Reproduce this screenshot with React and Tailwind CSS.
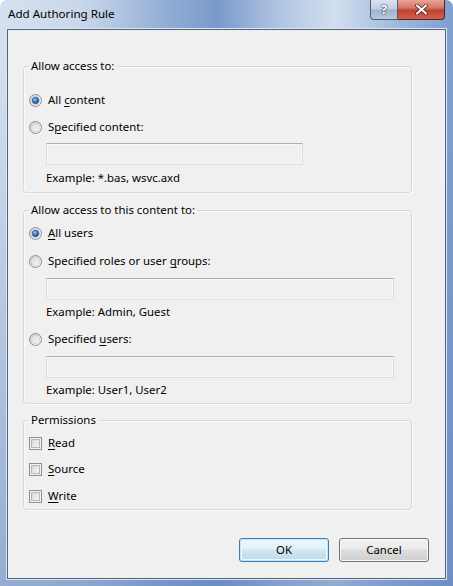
import { Fragment } from "react";

function Radio({ checked }) {
    return (
        <svg width="13" height="13" viewBox="0 0 13 13" className="shrink-0">
            <defs>
                <linearGradient id="rOuter" x1="0" y1="0" x2="1" y2="1">
                    <stop offset="0" stopColor="#d0d2d5" />
                    <stop offset="1" stopColor="#fbfbfb" />
                </linearGradient>
                <linearGradient id="rInner" x1="0" y1="0" x2="1" y2="1">
                    <stop offset="0" stopColor="#dadbdd" />
                    <stop offset="1" stopColor="#f7f7f7" />
                </linearGradient>
                <radialGradient id="rDot" cx="0.4" cy="0.35" r="0.7">
                    <stop offset="0" stopColor="#9bd3f5" />
                    <stop offset="0.55" stopColor="#2e78b8" />
                    <stop offset="1" stopColor="#154a7e" />
                </radialGradient>
            </defs>
            <circle cx="6.5" cy="6.5" r="6" fill="url(#rOuter)" stroke="#8b8d90" strokeWidth="1" />
            <circle cx="6.5" cy="6.5" r="4.2" fill="url(#rInner)" stroke="#c3c6ca" strokeWidth="0.6" />
            {checked && <circle cx="6.5" cy="6.5" r="3.2" fill="url(#rDot)" stroke="#1c4c7c" strokeWidth="0.6" />}
        </svg>
    )
}

function Check() {
    return (
        <div className="w-[13px] h-[13px] shrink-0 border border-[#8e8f8f] bg-[#f4f4f4] p-[1px]">
            <div className="w-full h-full border border-[#b4b8bd] bg-[linear-gradient(135deg,#d6d8db,#f6f6f6)]"></div>
        </div>
    )
}

// label with an access key: [before, key, after]
function Lbl({ parts }) {
    return (
        <span className="leading-[16px]">
            {parts[0]}<span className="underline underline-offset-[2px]">{parts[1]}</span>{parts[2]}
        </span>
    )
}

function TextBox({ w }) {
    return (
        <div className={`${w} h-[22px] ml-[22px] border border-[#dadde2] border-t-[#aeb0b5] bg-[#f0f0f0] shadow-[inset_0_0_0_1px_#f7f7f7]`}></div>
    )
}

function Group({ title, className, children }) {
    return (
        <fieldset className={`w-[389px] ml-[15px] border border-[#d5dadf] rounded-[3px] shadow-[inset_1px_1px_0_#fafafa,1px_1px_0_#fafafa] ${className}`}>
            <legend className="ml-[5px] px-[2px] leading-[16px]">{title}</legend>
            {children}
        </fieldset>
    )
}

export default function App() {
    return (
        <div className="w-[453px] h-[586px] flex flex-col rounded-t-[7px] overflow-hidden bg-[linear-gradient(180deg,rgba(255,255,255,0)_8%,rgba(95,130,185,0.55)_100%),linear-gradient(90deg,#d6e1ef_0%,#c9d7ea_18%,#8eabd3_38%,#7a9acb_48%,#b2c6e2_62%,#d2deee_74%,#9fb8dc_88%,#7f9fcf_100%)] font-['Noto_Sans',sans-serif] text-[11.4px] text-black">
            <div className="h-[29px] shrink-0 flex items-start relative">
                <div className="pl-[8px] pt-[6px] text-[11.6px] leading-[16px] text-black">Add Authoring Rule</div>
                <div className="ml-auto mr-[8px] flex h-[20px]">
                    <div className="w-[28px] h-[20px] border border-[#4a5f7a] border-t-0 rounded-bl-[4px] bg-[linear-gradient(180deg,#d9e3ef_0%,#c3d1e2_45%,#9fb3cc_55%,#b9c9dd_100%)] flex items-center justify-center">
                        <span className="text-[13px] font-bold text-white leading-none [text-shadow:0_0_2px_#1f2f44,0_0_1px_#1f2f44]">?</span>
                    </div>
                    <div className="w-[47px] h-[20px] border border-[#5a2018] border-t-0 border-l-0 rounded-br-[4px] bg-[linear-gradient(180deg,#e6a596_0%,#d4786a_40%,#c2402c_55%,#d0634e_100%)] flex items-center justify-center">
                        <svg width="13" height="11" viewBox="0 0 13 11">
                            <path d="M2 1.5 L11 9.5 M11 1.5 L2 9.5" stroke="#3d1510" strokeWidth="3.6" strokeLinecap="round" />
                            <path d="M2 1.5 L11 9.5 M11 1.5 L2 9.5" stroke="#ffffff" strokeWidth="2.2" strokeLinecap="round" />
                        </svg>
                    </div>
                </div>
            </div>
            <div className="mx-[7px] mb-[7px] flex-1 border border-[#4d6580] bg-[#f0f0f0] flex flex-col shadow-[0_0_0_1px_#dce6f2]">
                <Group title="Allow access to:" className="mt-[28px] pb-[6px]">
                    <div className="flex items-center gap-[6px] pl-[5px] mt-[18px]">
                        <Radio checked />
                        <Lbl parts={["All ", "c", "ontent"]} />
                    </div>
                    <div className="flex items-center gap-[6px] pl-[5px] mt-[11px]">
                        <Radio />
                        <Lbl parts={["S", "p", "ecified content:"]} />
                    </div>
                    <div className="mt-[8px]"><TextBox w="w-[257px]" /></div>
                    <div className="ml-[22px] mt-[5px] leading-[16px]">Example: *.bas, wsvc.axd</div>
                </Group>
                <Group title="Allow access to this content to:" className="mt-[9px] pb-[5px]">
                    <div className="flex items-center gap-[6px] pl-[5px] mt-[7px]">
                        <Radio checked />
                        <Lbl parts={["", "A", "ll users"]} />
                    </div>
                    <div className="flex items-center gap-[6px] pl-[5px] mt-[12px]">
                        <Radio />
                        <Lbl parts={["Specified roles or user ", "g", "roups:"]} />
                    </div>
                    <div className="mt-[9px]"><TextBox w="w-[348px]" /></div>
                    <div className="ml-[22px] mt-[4px] leading-[16px]">Example: Admin, Guest</div>
                    <div className="flex items-center gap-[6px] pl-[5px] mt-[11px]">
                        <Radio />
                        <Lbl parts={["Specified ", "u", "sers:"]} />
                    </div>
                    <div className="mt-[9px]"><TextBox w="w-[348px]" /></div>
                    <div className="ml-[22px] mt-[4px] leading-[16px]">Example: User1, User2</div>
                </Group>
                <Group title="Permissions" className="mt-[8px] pb-[5px]">
                    {[["R", "ead", 7], ["S", "ource", 10], ["W", "rite", 11]].map(([k, rest, mt]) => (
                        <Fragment key={k}>
                            <div className={`flex items-center gap-[6px] pl-[5px] ${mt == 7 ? "mt-[7px]" : mt == 10 ? "mt-[10px]" : "mt-[11px]"}`}>
                                <Check />
                                <Lbl parts={["", k, rest]} />
                            </div>
                        </Fragment>
                    ))}
                </Group>
                <div className="flex justify-end gap-[10px] mt-[28px] mr-[16px]">
                    <button className="w-[90px] h-[24px] rounded-[3px] border border-[#3c7fb1] bg-[linear-gradient(180deg,#eef6fa_0%,#e3f0f7_45%,#cfe6f2_50%,#bddceb_100%)] shadow-[inset_0_0_0_1px_#bfe7f7,inset_0_0_0_2px_#e9f7fd] leading-[16px]">OK</button>
                    <button className="w-[90px] h-[24px] rounded-[3px] border border-[#707070] bg-[linear-gradient(180deg,#f2f2f2_0%,#ebebeb_45%,#dddddd_50%,#cfcfcf_100%)] shadow-[inset_0_0_0_1px_#fbfbfb] leading-[16px]">Cancel</button>
                </div>
            </div>
        </div>
    )
}
